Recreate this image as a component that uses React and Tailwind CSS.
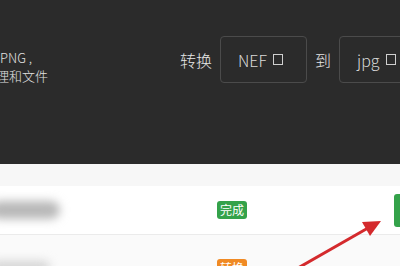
import React from "react";

const cjk = { fontFamily: '"Noto Sans CJK SC", "Noto Sans", sans-serif' };

function SelectBox({ label, className }) {
  return (
    <div
      className={`flex h-[47px] shrink-0 items-center gap-[6px] whitespace-nowrap rounded-[4px] border border-[#4b4b4b] pl-[17px] text-[16px] font-light text-[#d9d9d9] ${className}`}
    >
      <span>{label}</span>
      <span className="inline-block h-[11px] w-[10px] border-[1.5px] border-[#cfcfcf]" />
    </div>
  );
}

function Badge({ text, color }) {
  return (
    <span className={`inline-flex h-[18px] shrink-0 items-center rounded-[3px] px-[3px] text-[12px] leading-none whitespace-nowrap text-white ${color}`}>
      {text}
    </span>
  );
}

export default function App() {
  return (
    <div className="relative h-[266px] w-[400px] overflow-hidden bg-white" style={cjk}>
      {/* dark header */}
      <div className="flex h-[164px] items-start bg-[#2b2b2b] pt-[36px]">
        <div className="flex h-[47px] w-[180px] shrink-0 flex-col whitespace-nowrap pt-[13px] text-[13px] font-light leading-[18px] text-[#e2e2e2]">
          <span>PNG ,</span>
          <span className="-ml-[4px]">理和文件</span>
        </div>
        <div className="flex h-[47px] shrink-0 items-center gap-2">
          <span className="shrink-0 whitespace-nowrap text-[16px] font-light text-[#e6e6e6]">转换</span>
          <SelectBox label="NEF" className="w-[87px]" />
          <span className="shrink-0 whitespace-nowrap text-[16px] font-light text-[#e6e6e6]">到</span>
          <SelectBox label="jpg" className="w-[87px]" />
        </div>
      </div>

      {/* table */}
      <div className="h-[22px] bg-[#f7f7f7]" />
      <div className="flex h-[49px] items-center border-b border-[#ebebeb] bg-white">
        <div className="w-[217px] shrink-0">
          <div className="-ml-[10px] h-[18px] w-[70px] rounded-full bg-[#b8b8b8] blur-[5px]" />
        </div>
        <Badge text="完成" color="bg-[#34a24a]" />
        <div className="ml-auto h-[33px] w-[6px] rounded-l-[3px] bg-[#34a24a]" />
      </div>
      <div className="flex h-[49px] items-start bg-[#fafafa] pt-[24px]">
        <div className="w-[217px] shrink-0">
          <div className="-ml-[10px] mt-[2px] h-[12px] w-[60px] rounded-full bg-[#d4d4d4] blur-[5px]" />
        </div>
        <Badge text="转换" color="bg-[#f08a24]" />
      </div>

      {/* annotation arrow */}
      <svg className="absolute left-0 top-0" width="400" height="266" viewBox="0 0 400 266">
        <line x1="298" y1="268" x2="368" y2="228" stroke="#d42a2d" strokeWidth="3" strokeLinecap="round" />
        <polygon points="381,221 362,222 370,236" fill="#d42a2d" />
      </svg>
    </div>
  );
}
